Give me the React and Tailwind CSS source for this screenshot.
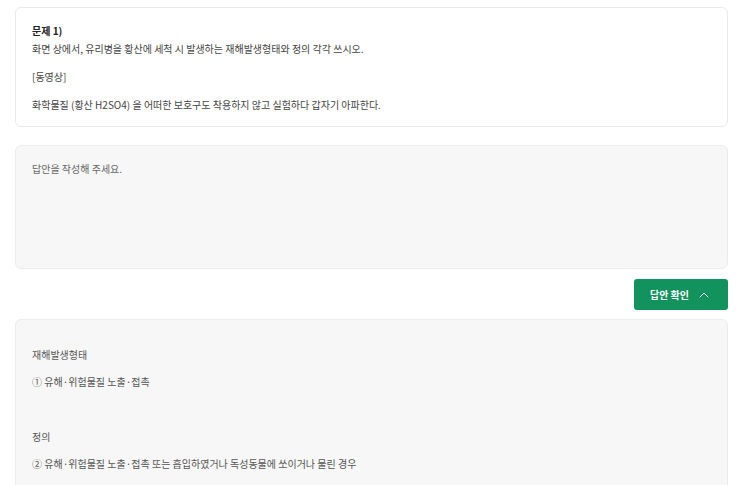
import { ChevronUp } from "lucide-react";

const font = {
  fontFamily: '"Noto Sans CJK KR", "Noto Sans", sans-serif',
};

export default function App() {
  return (
    <div
      className="h-screen overflow-hidden bg-white px-[15px] pt-[7px] text-[10px] text-[#444]"
      style={font}
    >
      {/* Question */}
      <div className="rounded-md border border-[#e9e9e9] bg-white px-4 pt-[14px] pb-[12px]">
        <p className="font-bold leading-[18px] text-[#222]">문제 1)</p>
        <p className="leading-[18px]">
          화면 상에서, 유리병을 황산에 세척 시 발생하는 재해발생형태와 정의 각각 쓰시오.
        </p>
        <p className="mt-[10px] leading-[18px]">[동영상]</p>
        <p className="mt-[10px] leading-[18px]">
          화학물질 (황산 H2SO4) 을 어떠한 보호구도 착용하지 않고 실험하다 갑자기 아파한다.
        </p>
      </div>

      {/* Answer input */}
      <div className="mt-[18px] h-[124px] rounded-md border border-[#ececec] bg-[#f7f7f7] px-4 pt-[14px] text-[#666]">
        <p className="leading-[18px]">답안을 작성해 주세요.</p>
      </div>

      <div className="mt-[10px] flex justify-end">
        <button className="flex h-[31px] w-[94px] items-center justify-center gap-[7px] rounded-[3px] bg-[#12935d] text-[10px] font-bold text-white">
          <span>답안 확인</span>
          <ChevronUp size={16} strokeWidth={1.4} />
        </button>
      </div>

      {/* Solution */}
      <div className="mt-[9px] h-[200px] rounded-md border border-[#ececec] bg-[#f7f7f7] px-4 pt-[21px] text-[#555]">
        <p className="flex h-[27.3px] items-center">재해발생형태</p>
        <p className="flex h-[27.3px] items-center">① 유해·위험물질 노출·접촉</p>
        <p className="h-[27.3px]"></p>
        <p className="flex h-[27.3px] items-center">정의</p>
        <p className="flex h-[27.3px] items-center">
          ② 유해·위험물질 노출·접촉 또는 흡입하였거나 독성동물에 쏘이거나 물린 경우
        </p>
      </div>
    </div>
  );
}
